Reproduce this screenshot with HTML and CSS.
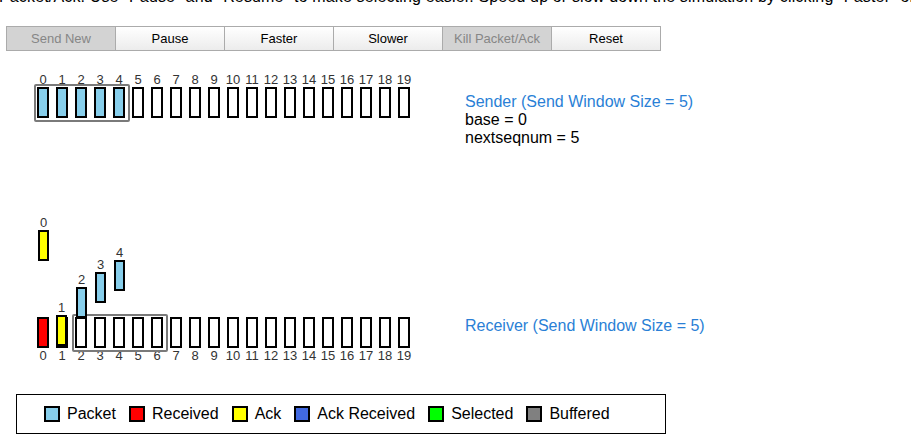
FILE: index.html
```html
<!DOCTYPE html>
<html lang="en">
<head>
<meta charset="utf-8">
<title>Selective Repeat Simulation</title>
<link rel="stylesheet" href="styles.css">
</head>
<body>
<p class="intro">Packet/Ack. Use "Pause" and "Resume" to make selecting easier. Speed up or slow down the simulation by clicking "Faster" or "Slower".</p>

<div class="toolbar">
  <button class="btn" disabled>Send New</button>
  <button class="btn">Pause</button>
  <button class="btn">Faster</button>
  <button class="btn">Slower</button>
  <button class="btn" disabled>Kill Packet/Ack</button>
  <button class="btn">Reset</button>
</div>

<section class="side sender">
  <div class="track">
    <div class="nums">
      <span class="num">0</span><span class="num">1</span><span class="num">2</span><span class="num">3</span><span class="num">4</span><span class="num">5</span><span class="num">6</span><span class="num">7</span><span class="num">8</span><span class="num">9</span><span class="num">10</span><span class="num">11</span><span class="num">12</span><span class="num">13</span><span class="num">14</span><span class="num">15</span><span class="num">16</span><span class="num">17</span><span class="num">18</span><span class="num">19</span>
    </div>
    <div class="slots">
      <div class="window w-sender"></div>
      <span class="slot packet"></span><span class="slot packet"></span><span class="slot packet"></span><span class="slot packet"></span><span class="slot packet"></span><span class="slot"></span><span class="slot"></span><span class="slot"></span><span class="slot"></span><span class="slot"></span><span class="slot"></span><span class="slot"></span><span class="slot"></span><span class="slot"></span><span class="slot"></span><span class="slot"></span><span class="slot"></span><span class="slot"></span><span class="slot"></span><span class="slot"></span>
    </div>
  </div>
  <div class="info sender-info">
    <div class="title">Sender (Send Window Size = 5)</div>
    <div>base = 0</div>
    <div>nextseqnum = 5</div>
  </div>
</section>

<section class="side receiver">
  <div class="flying" style="left:38px;top:15px"><span class="num">0</span><span class="fbox ack"></span></div>
  <div class="flying" style="left:56px;top:100px"><span class="num">1</span><span class="fbox ack"></span></div>
  <div class="flying" style="left:76px;top:72px"><span class="num">2</span><span class="fbox packet"></span></div>
  <div class="flying" style="left:95px;top:57px"><span class="num">3</span><span class="fbox packet"></span></div>
  <div class="flying" style="left:114px;top:45px"><span class="num">4</span><span class="fbox packet"></span></div>

  <div class="track">
    <div class="slots">
      <div class="window w-receiver"></div>
      <span class="slot received"></span><span class="slot"></span><span class="slot"></span><span class="slot"></span><span class="slot"></span><span class="slot"></span><span class="slot"></span><span class="slot"></span><span class="slot"></span><span class="slot"></span><span class="slot"></span><span class="slot"></span><span class="slot"></span><span class="slot"></span><span class="slot"></span><span class="slot"></span><span class="slot"></span><span class="slot"></span><span class="slot"></span><span class="slot"></span>
    </div>
    <div class="nums">
      <span class="num">0</span><span class="num">1</span><span class="num">2</span><span class="num">3</span><span class="num">4</span><span class="num">5</span><span class="num">6</span><span class="num">7</span><span class="num">8</span><span class="num">9</span><span class="num">10</span><span class="num">11</span><span class="num">12</span><span class="num">13</span><span class="num">14</span><span class="num">15</span><span class="num">16</span><span class="num">17</span><span class="num">18</span><span class="num">19</span>
    </div>
  </div>
  <div class="info receiver-info">
    <div class="title">Receiver (Send Window Size = 5)</div>
  </div>
</section>

<div class="legend">
  <span class="key"><span class="sw packet"></span>Packet</span>
  <span class="key"><span class="sw received"></span>Received</span>
  <span class="key"><span class="sw ack"></span>Ack</span>
  <span class="key"><span class="sw ackrec"></span>Ack Received</span>
  <span class="key"><span class="sw selected"></span>Selected</span>
  <span class="key"><span class="sw buffered"></span>Buffered</span>
</div>
</body>
</html>
```

FILE: styles.css
```css
* { box-sizing: border-box; }

html, body {
  margin: 0;
  padding: 0;
  background: #fff;
  overflow: hidden;
}

body {
  font-family: "Liberation Sans", Arial, sans-serif;
  color: #000;
  width: 911px;
  height: 448px;
}

.intro {
  margin: -12px 0 0 -1px;
  font-size: 16px;
  line-height: 18px;
  white-space: nowrap;
  letter-spacing: 0.15px;
}

.toolbar {
  display: flex;
  margin: 20px 0 0 6px;
}

.btn {
  width: 110px;
  height: 25px;
  margin: 0 0 0 -1px;
  padding: 0;
  border: 1px solid #ababab;
  background: linear-gradient(#ffffff, #ececec);
  font-family: "Liberation Sans", Arial, sans-serif;
  font-size: 13px;
  color: #000;
}
.btn:first-child { margin-left: 0; }
.btn:disabled {
  background: #d3d3d3;
  color: #868686;
}

.side {
  display: flex;
  position: relative;
}

.sender { margin-top: 21px; }

.receiver {
  margin-top: 53px;
  padding-top: 117px;
}

.track {
  width: 465px;
  padding-left: 37px;
  flex: none;
}

.nums, .slots {
  display: flex;
  gap: 7px;
}

.slots { position: relative; }

.num {
  width: 12px;
  height: 15px;
  display: flex;
  justify-content: center;
  font-size: 13px;
  line-height: 15px;
  color: #333;
  white-space: nowrap;
}

.slot {
  width: 12px;
  height: 31px;
  border: 2px solid #000;
  background: #fff;
  flex: none;
}

.packet { background: #87ceeb; }
.received { background: #ff0000; }
.ack { background: #ffff00; }
.ackrec { background: #4169e1; }
.selected { background: #00ff00; }
.buffered { background: #808080; }

.window {
  position: absolute;
  top: -3px;
  width: 96px;
  height: 38px;
  border: 2px solid #7a7a7a;
  border-radius: 2px;
  pointer-events: none;
}
.w-sender { left: -3px; }
.w-receiver { left: 35px; }

.flying {
  position: absolute;
  z-index: 2;
  width: 11px;
  display: flex;
  flex-direction: column;
  align-items: center;
}
.flying .num { width: 11px; }

.fbox {
  width: 11px;
  height: 31px;
  border: 2px solid #000;
}

.info {
  font-size: 16px;
  line-height: 18px;
}
.sender-info { padding-top: 21px; }
.receiver-info { padding-top: 0; }

.title { color: #2a7fd6; }

.legend {
  margin: 31px 0 0 16px;
  width: 650px;
  height: 40px;
  border: 1px solid #000;
  display: flex;
  align-items: center;
  padding-left: 27px;
  font-size: 16px;
}

.key {
  display: flex;
  align-items: center;
  margin-right: 13px;
}

.sw {
  width: 16px;
  height: 16px;
  border: 2px solid #000;
  margin-right: 7px;
}
```
